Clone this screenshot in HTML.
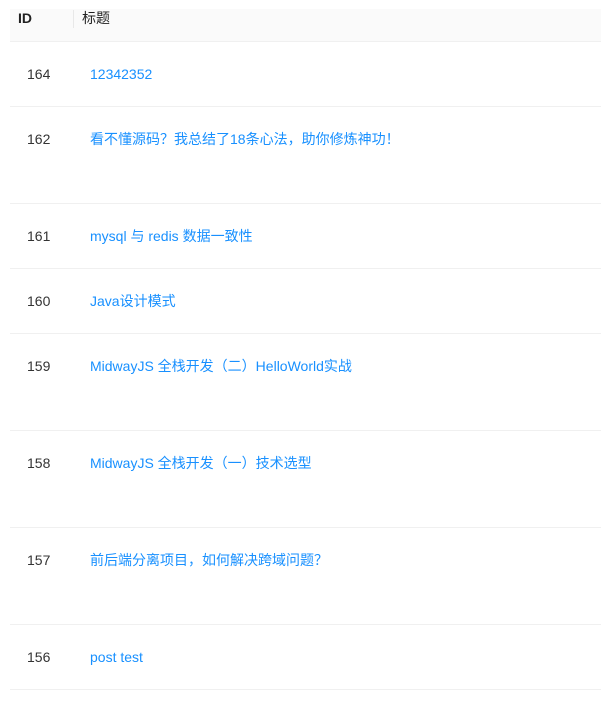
<!DOCTYPE html>
<html><head><meta charset="utf-8"><style>
body{margin:0;background:#fff;font-family:"Liberation Sans","Noto Sans CJK SC",sans-serif;font-size:14px;}
.wrap{position:absolute;left:10px;top:9px;width:591px;}
.head{height:32px;background:#fafafa;border-bottom:1px solid #f0f0f0;position:relative;color:#222;}
.head span{position:absolute;top:0;line-height:19px;}
.sep{position:absolute;left:63px;top:1px;width:1px;height:18px;background:#e8e8e8;}
.row{border-bottom:1px solid #f0f0f0;position:relative;}
.row .id{position:absolute;left:17px;top:22px;line-height:20px;color:#333;}
.row .t{position:absolute;left:80px;top:22px;line-height:20px;color:#1890ff;}
</style></head><body>
<div class="wrap">
<div class="head"><span style="left:8px;font-weight:bold">ID</span><div class="sep"></div><span style="left:72px">标题</span></div>
<div class="row" style="height:64px"><span class="id">164</span><span class="t">12342352</span></div>
<div class="row" style="height:96px"><span class="id">162</span><span class="t">看不懂源码？我总结了18条心法，助你修炼神功！</span></div>
<div class="row" style="height:64px"><span class="id">161</span><span class="t">mysql 与 redis 数据一致性</span></div>
<div class="row" style="height:64px"><span class="id">160</span><span class="t">Java设计模式</span></div>
<div class="row" style="height:96px"><span class="id">159</span><span class="t">MidwayJS 全栈开发（二）HelloWorld实战</span></div>
<div class="row" style="height:96px"><span class="id">158</span><span class="t">MidwayJS 全栈开发（一）技术选型</span></div>
<div class="row" style="height:96px"><span class="id">157</span><span class="t">前后端分离项目，如何解决跨域问题？</span></div>
<div class="row" style="height:64px"><span class="id">156</span><span class="t">post test</span></div>
</div>
</body></html>
